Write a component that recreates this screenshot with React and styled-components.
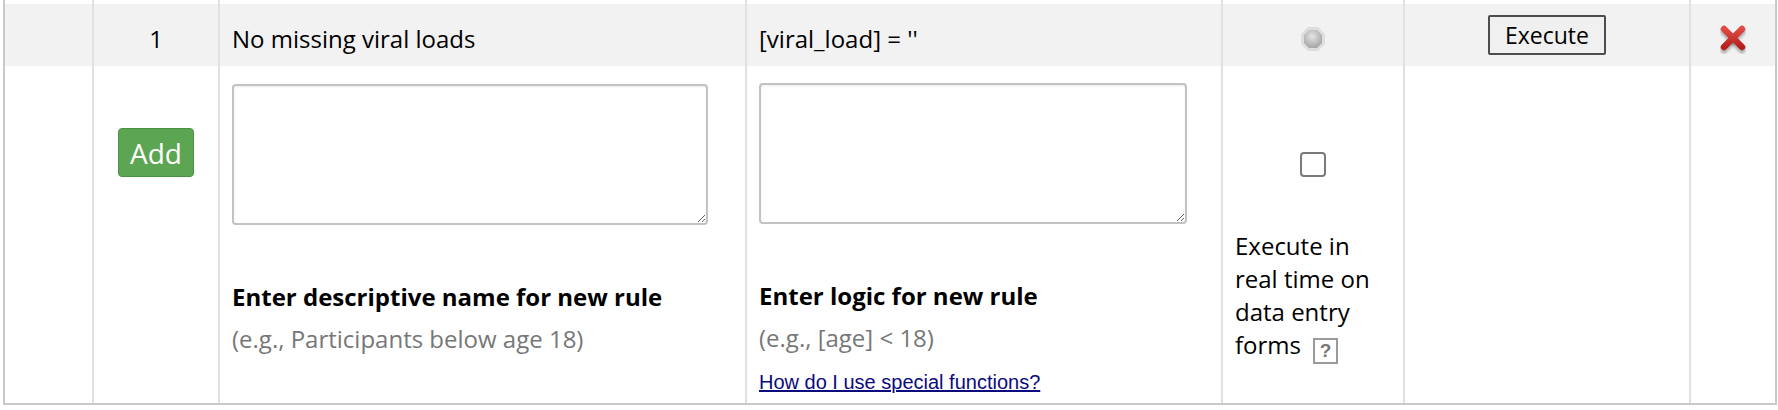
import styled, { createGlobalStyle } from 'styled-components'

const GlobalStyle = createGlobalStyle`
  body {
    margin: 0;
    background: #fff;
    font-family: 'Open Sans', 'Noto Sans', sans-serif;
    color: #000;
  }
`

const columns = '89px 126px 527px 476px 182px 286px 84px'

const Table = styled.div`
  margin-left: 3px;
  width: 1774px;
  box-sizing: border-box;
  border: 2px solid #c9c9c9;
  border-top: none;
  font-size: 24px;
  line-height: 33px;
`

const Row = styled.div`
  display: grid;
  grid-template-columns: ${columns};
  background: ${({ $shaded }) => ($shaded ? '#f2f2f2' : '#fff')};
  min-height: ${({ $height }) => $height}px;
`

const Cell = styled.div`
  box-sizing: border-box;
  border-right: 2px solid #e1e1e1;
  padding: ${({ $top }) => $top || 0}px 12px 0 12px;
  display: flex;
  flex-direction: column;
  align-items: ${({ $align }) => ($align === 'center' ? 'center' : 'flex-start')};
  justify-content: ${({ $middle }) => ($middle ? 'center' : 'flex-start')};

  &:last-child {
    border-right: none;
  }
`

const ExecuteButton = styled.button`
  font-family: 'Open Sans', sans-serif;
  font-size: 23px;
  color: #000;
  background: #f0f0f0;
  border: 2px solid #4d4d4d;
  border-radius: 2px;
  height: 40px;
  padding: 0 15px;
  margin-bottom: 7px;
  line-height: 34px;
`

const AddButton = styled.button`
  font-family: 'Open Sans', sans-serif;
  font-size: 28px;
  color: #fff;
  background: #5ca552;
  border: 1px solid #4c9244;
  border-radius: 4px;
  height: 49px;
  padding: 0 11px;
  line-height: 46px;
`

const RuleBox = styled.textarea`
  display: block;
  box-sizing: border-box;
  width: 95%;
  height: 141px;
  border: 2px solid #c2c2c2;
  border-radius: 4px;
  box-shadow: inset 0 1px 2px rgba(0, 0, 0, 0.08);
  font-family: inherit;
  font-size: 20px;
`

const Label = styled.div`
  margin-top: 55px;
  font-weight: 700;
`

const Hint = styled.div`
  margin-top: 9px;
  color: #777;
`

const HelpLink = styled.a`
  margin-top: 17px;
  font-family: 'Liberation Sans', Arial, sans-serif;
  font-size: 20px;
  line-height: 23px;
  color: #0b0b7e;
  text-decoration: underline;
`

const CheckBox = styled.input`
  appearance: none;
  margin: 0;
  width: 26px;
  height: 25px;
  box-sizing: border-box;
  border: 2px solid #7a7a7a;
  border-radius: 4px;
  background: #fff;
`

const RealTimeText = styled.div`
  margin-top: 52px;
  align-self: stretch;
`

const HelpBox = styled.span`
  display: inline-block;
  box-sizing: border-box;
  width: 25px;
  height: 26px;
  margin-left: 12px;
  border: 2px solid #9a9a9a;
  color: #777;
  font-family: 'Liberation Sans', Arial, sans-serif;
  font-weight: 700;
  font-size: 19px;
  line-height: 22px;
  text-align: center;
  vertical-align: -3px;
`

function StatusBullet() {
  return (
    <svg width="28" height="28" viewBox="0 0 28 28">
      <defs>
        <radialGradient id="bulletFill" cx="45%" cy="35%" r="65%">
          <stop offset="0%" stopColor="#e4e4e4" />
          <stop offset="100%" stopColor="#a6a6a6" />
        </radialGradient>
      </defs>
      <polygon points="9,2 19,2 26,9 26,19 19,26 9,26 2,19 2,9" fill="#dedede" />
      <polygon points="10,5 18,5 23,10 23,18 18,23 10,23 5,18 5,10" fill="url(#bulletFill)" />
    </svg>
  )
}

function DeleteIcon() {
  return (
    <svg width="30" height="30" viewBox="0 0 30 30">
      <defs>
        <linearGradient id="crossFill" x1="0" y1="0" x2="0" y2="1">
          <stop offset="0%" stopColor="#e04a43" />
          <stop offset="100%" stopColor="#b3211d" />
        </linearGradient>
        <filter id="crossShadow" x="-20%" y="-20%" width="140%" height="150%">
          <feGaussianBlur stdDeviation="1.2" />
        </filter>
      </defs>
      <g stroke="#000" strokeOpacity="0.25" strokeWidth="7" strokeLinecap="round" filter="url(#crossShadow)">
        <line x1="6" y1="8" x2="24" y2="26" />
        <line x1="24" y1="8" x2="6" y2="26" />
      </g>
      <g stroke="url(#crossFill)" strokeWidth="6.5" strokeLinecap="round">
        <line x1="6" y1="5" x2="24" y2="23" />
        <line x1="24" y1="5" x2="6" y2="23" />
      </g>
    </svg>
  )
}

export default function App() {
  return (
    <>
      <GlobalStyle />
      <Table>
        <Row $height={4}>
          <Cell /><Cell /><Cell /><Cell /><Cell /><Cell /><Cell />
        </Row>
        <Row $shaded $height={62}>
          <Cell $middle $top={7} />
          <Cell $middle $top={7} $align="center">1</Cell>
          <Cell $middle $top={7}>No missing viral loads</Cell>
          <Cell $middle $top={7}>[viral_load] = ''</Cell>
          <Cell $middle $top={7} $align="center"><StatusBullet /></Cell>
          <Cell $middle $top={7} $align="center"><ExecuteButton>Execute</ExecuteButton></Cell>
          <Cell $middle $top={7} $align="center"><DeleteIcon /></Cell>
        </Row>
        <Row $height={337}>
          <Cell />
          <Cell $top={62} $align="center">
            <AddButton>Add</AddButton>
          </Cell>
          <Cell $top={18}>
            <RuleBox />
            <Label>Enter descriptive name for new rule</Label>
            <Hint>(e.g., Participants below age 18)</Hint>
          </Cell>
          <Cell $top={17}>
            <RuleBox />
            <Label>Enter logic for new rule</Label>
            <Hint>(e.g., [age] &lt; 18)</Hint>
            <HelpLink href="#">How do I use special functions?</HelpLink>
          </Cell>
          <Cell $top={86} $align="center">
            <CheckBox type="checkbox" />
            <RealTimeText>
              Execute in real time on data entry forms<HelpBox>?</HelpBox>
            </RealTimeText>
          </Cell>
          <Cell />
          <Cell />
        </Row>
      </Table>
    </>
  )
}
